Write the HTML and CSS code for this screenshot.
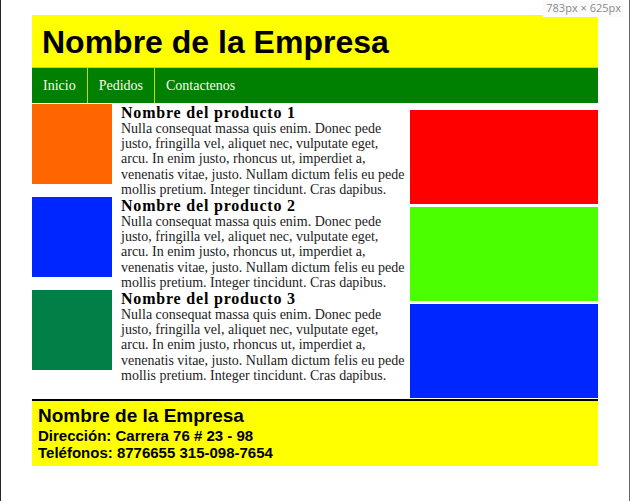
FILE: index.html
```html
<!DOCTYPE html>
<html lang="es">
<head>
<meta charset="utf-8">
<title>Nombre de la Empresa</title>
<link rel="stylesheet" href="styles.css">
</head>
<body>
<div class="frame">
  <div class="size-label">783px × 625px</div>
  <div class="page">
    <header class="header"><h1 class="brand">Nombre de la Empresa</h1></header>
    <nav class="nav">
      <a class="nav-link" href="#">Inicio</a>
      <a class="nav-link" href="#">Pedidos</a>
      <a class="nav-link" href="#">Contactenos</a>
    </nav>
    <main class="main">
      <section class="products">
        <article class="product">
          <div class="thumb thumb-orange"></div>
          <div class="info">
            <h2 class="product-title">Nombre del producto 1</h2>
            <p class="product-text">Nulla consequat massa quis enim. Donec pede justo, fringilla vel, aliquet nec, vulputate eget, arcu. In enim justo, rhoncus ut, imperdiet a, venenatis vitae, justo. Nullam dictum felis eu pede mollis pretium. Integer tincidunt. Cras dapibus.</p>
          </div>
        </article>
        <article class="product">
          <div class="thumb thumb-blue"></div>
          <div class="info">
            <h2 class="product-title">Nombre del producto 2</h2>
            <p class="product-text">Nulla consequat massa quis enim. Donec pede justo, fringilla vel, aliquet nec, vulputate eget, arcu. In enim justo, rhoncus ut, imperdiet a, venenatis vitae, justo. Nullam dictum felis eu pede mollis pretium. Integer tincidunt. Cras dapibus.</p>
          </div>
        </article>
        <article class="product">
          <div class="thumb thumb-green"></div>
          <div class="info">
            <h2 class="product-title">Nombre del producto 3</h2>
            <p class="product-text">Nulla consequat massa quis enim. Donec pede justo, fringilla vel, aliquet nec, vulputate eget, arcu. In enim justo, rhoncus ut, imperdiet a, venenatis vitae, justo. Nullam dictum felis eu pede mollis pretium. Integer tincidunt. Cras dapibus.</p>
          </div>
        </article>
      </section>
      <aside class="side">
        <div class="block block-red"></div>
        <div class="block block-lime"></div>
        <div class="block block-blue"></div>
      </aside>
    </main>
    <footer class="footer">
      <div class="footer-name">Nombre de la Empresa</div>
      <div class="footer-line">Dirección: Carrera 76 # 23 - 98</div>
      <div class="footer-line">Teléfonos: 8776655 315-098-7654</div>
    </footer>
  </div>
</div>
</body>
</html>
```
FILE: styles.css
```css
* { box-sizing: border-box; }
html, body { margin: 0; padding: 0; background: #fff; }

.frame {
  position: relative;
  width: 630px;
  height: 501px;
  border-left: 1px solid #262626;
  border-right: 1px solid #6a6a6a;
  overflow: hidden;
}

.size-label {
  position: absolute;
  top: 1px;
  right: 6px;
  padding: 0 2px 2px 3px;
  background: #fbfbfb;
  color: #8a8a8a;
  font-family: "Open Sans", "Noto Sans", sans-serif;
  font-size: 11px;
  line-height: 14px;
}

.page {
  width: 566px;
  margin-left: 31px;
  padding-top: 15px;
}

.header {
  background: #ffff00;
  height: 52px;
  padding: 2px 0 0 10px;
}
.brand {
  margin: 0;
  font-family: "Liberation Sans", Arial, sans-serif;
  font-weight: bold;
  font-size: 32px;
  line-height: 50px;
  color: #000;
}

.nav {
  display: flex;
  background: #008000;
  border-top: 1px solid #a9c6c0;
  height: 36px;
}
.nav-link {
  padding: 0 11px;
  color: #fffbee;
  text-decoration: none;
  font-family: "Liberation Serif", "Times New Roman", serif;
  font-size: 14px;
  line-height: 36px;
}
.nav-link + .nav-link { border-left: 1px solid #c9d600; }

.main {
  display: flex;
  padding-top: 1px;
}

.products {
  width: 378px;
  display: flex;
  flex-direction: column;
}
.product {
  display: flex;
  gap: 9px;
  height: 93px;
}
.thumb {
  width: 80px;
  height: 80px;
  flex: none;
}
.thumb-orange { background: #ff6600; }
.thumb-blue { background: #0026ff; }
.thumb-green { background: #007f46; }

.info { width: 287px; }
.product-title {
  margin: 0;
  font-family: "Liberation Serif", "Times New Roman", serif;
  font-weight: bold;
  font-size: 16px;
  letter-spacing: 0.8px;
  line-height: 17px;
  color: #000;
}
.product-text {
  margin: 0;
  font-family: "Liberation Serif", "Times New Roman", serif;
  font-size: 14px;
  line-height: 15.2px;
  color: #1c1c1c;
}

.side {
  width: 188px;
  display: flex;
  flex-direction: column;
  gap: 3px;
  padding-top: 6px;
}
.block { height: 94px; }
.block-red { background: #ff0000; }
.block-lime { background: #4cff00; }
.block-blue { background: #0026ff; }

.footer {
  margin-top: 1px;
  border-top: 2px solid #000;
  background: #ffff00;
  height: 67px;
  padding: 4px 0 0 6px;
  font-family: "Liberation Sans", Arial, sans-serif;
  font-weight: bold;
  color: #000;
}
.footer-name { font-size: 19px; line-height: 22px; }
.footer-line { font-size: 15px; line-height: 17px; }
```
